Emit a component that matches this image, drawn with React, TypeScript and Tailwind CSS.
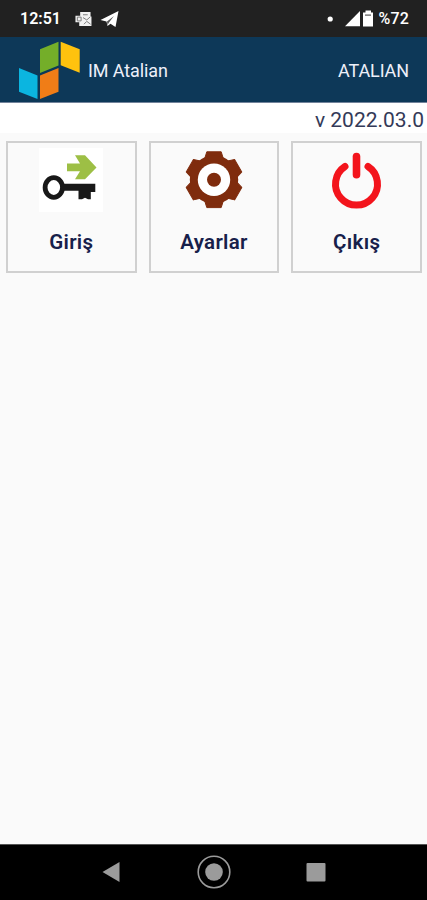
import type { ReactNode } from 'react'

interface MenuCardProps {
  label: string
  children: ReactNode
}

function MenuCard({ label, children }: MenuCardProps) {
  return (
    <button className="flex h-[132px] flex-col items-center border-2 border-[#d0d0d0] bg-[#fafafa] pt-[5px]">
      {children}
      <span className="mt-[18px] text-[20.5px] leading-6 font-semibold tracking-[0.3px] text-[#17204a]">{label}</span>
    </button>
  )
}

function Logo() {
  return (
    <svg width="62" height="60" viewBox="18 40 62 60">
      <path d="M40 49.3 58.5 41.7V65.4L40 73Z" fill="#74ae29" />
      <path d="M60.7 41.7 79.7 49.3V72.8L60.7 65.2Z" fill="#ffc20e" />
      <path d="M19 68 37.5 75.5V99L19 91.7Z" fill="#0bb5e0" />
      <path d="M40 75.5 58.5 68V91.7L40 99Z" fill="#f07d17" />
    </svg>
  )
}

function LoginIcon() {
  return (
    <svg width="64" height="64" viewBox="39.5 148 64 64">
      <rect x="39" y="148" width="65" height="64" fill="#fff" />
      <path d="M67.5 163.5H80.5L75.5 155.2H85.5L97 167.5 85.5 179.3H75.5L80.5 171.2H67.5Z" fill="#9dbf45" />
      <ellipse cx="54.3" cy="187.5" rx="8.7" ry="9.8" fill="none" stroke="#181818" strokeWidth="4.8" />
      <path d="M63 183.8H95.8V192H91.3V199.3H88.5L85.5 197.7 82.5 199.3H79V190.7H63Z" fill="#181818" />
    </svg>
  )
}

function SettingsIcon() {
  return (
    <svg width="64" height="64" viewBox="182 148 64 64">
      {/* One tooth every 60 degrees */}
      {[0, 60, 120, 180, 240, 300].map(angle => (
        <path
          key={angle}
          d="M203 164 206.8 151.8H221.2L225 164Z"
          fill="#7f2c0d"
          stroke="#7f2c0d"
          strokeLinejoin="round"
          transform={`rotate(${angle} 214 179.7)`}
        />
      ))}
      <circle cx="214" cy="179.7" r="24.2" fill="#7f2c0d" />
      <circle cx="214" cy="179.7" r="16.2" fill="#fff" />
      <circle cx="214" cy="179.7" r="7" fill="#7f2c0d" />
    </svg>
  )
}

function ExitIcon() {
  return (
    <svg width="64" height="64" viewBox="324.5 148 64 64" fill="none" stroke="#f3141c" strokeLinecap="round">
      <path d="M344.5 166.5A21 21 0 1 0 367.5 166.5" strokeWidth="7" />
      <path d="M356 156.5V174.8" strokeWidth="7.6" />
    </svg>
  )
}

function StatusBar() {
  return (
    <div className="flex h-[37px] items-center bg-[#212121] pt-px pr-[18px] pl-[20px] text-white">
      <span className="text-[16px] leading-none font-semibold">12:51</span>
      <svg className="ml-[13px]" width="18" height="16" viewBox="0 0 18 17">
        <path d="M6 1H17V5L18 6V16H5V12H1V5H6Z" fill="#f1f1f1" />
        <path d="M3 6.5H7V10.5H3ZM9 4H14M9 7 13 9.5 17 6M10 14 13 11 17 14" fill="none" stroke="#777" />
      </svg>
      <svg className="ml-[8px]" width="19" height="18" viewBox="0 0 19 18">
        <path d="M.5 10 18.5 1 15.5 17 10.5 13.8 7.5 16 6.5 11.5Z" fill="#fff" />
        <path d="M7 11.5 14 6 9 12.5 7.5 15Z" fill="#555" />
      </svg>
      <svg className="ml-auto" width="48" height="20" viewBox="326 8.5 48 20" fill="#fff">
        <circle cx="330.2" cy="18.5" r="2.6" />
        <path d="M345 25.7 360 10.5V25.7Z" />
        <path d="M365.5 10H371V12H373V26H363V12H365.5Z" />
        <path d="M365 14H371V15.2H365Z" fill="#555" />
      </svg>
      <span className="ml-[4px] text-[16px] leading-none font-medium tracking-[0.2px]">%72</span>
    </div>
  )
}

function NavigationBar() {
  return (
    <div className="flex h-[56px] items-center justify-center border-t border-[#555] bg-black pb-[2px]">
      <svg width="230" height="36" viewBox="99 854 230 36" fill="#9b9b9b">
        <path d="M102.5 872 119.5 862V882Z" />
        <circle cx="214" cy="872" r="15.8" fill="none" stroke="#9b9b9b" strokeWidth="1.6" />
        <circle cx="214" cy="872" r="8.8" />
        <rect x="306.5" y="863" width="19" height="18.5" rx="1" />
      </svg>
    </div>
  )
}

export default function App() {
  return (
    <div className="flex h-[900px] w-[427px] flex-col overflow-hidden bg-[#fafafa] font-[Roboto,sans-serif]">
      <StatusBar />
      <header className="flex h-[66px] items-center border-b border-[#72839b] bg-[#0d3858] pt-[2px] pr-[18px] pl-[18px] text-[18px] text-[#eef0fa]">
        <div className="pb-[2px]">
          <Logo />
        </div>
        <span className="ml-[8px] tracking-[-0.1px]">IM Atalian</span>
        <span className="ml-auto tracking-[-0.1px]">ATALIAN</span>
      </header>
      <div className="flex h-[30px] items-center justify-end bg-white pt-[4px] pr-[3px] text-[21px] leading-none text-[#343a58]">
        v 2022.03.0
      </div>
      <main className="grid flex-1 grid-cols-3 content-start gap-x-[12px] bg-[#fafafa] pt-[8px] pr-[5px] pl-[6px]">
        <MenuCard label="Giriş">
          <LoginIcon />
        </MenuCard>
        <MenuCard label="Ayarlar">
          <SettingsIcon />
        </MenuCard>
        <MenuCard label="Çıkış">
          <ExitIcon />
        </MenuCard>
      </main>
      <NavigationBar />
    </div>
  )
}
